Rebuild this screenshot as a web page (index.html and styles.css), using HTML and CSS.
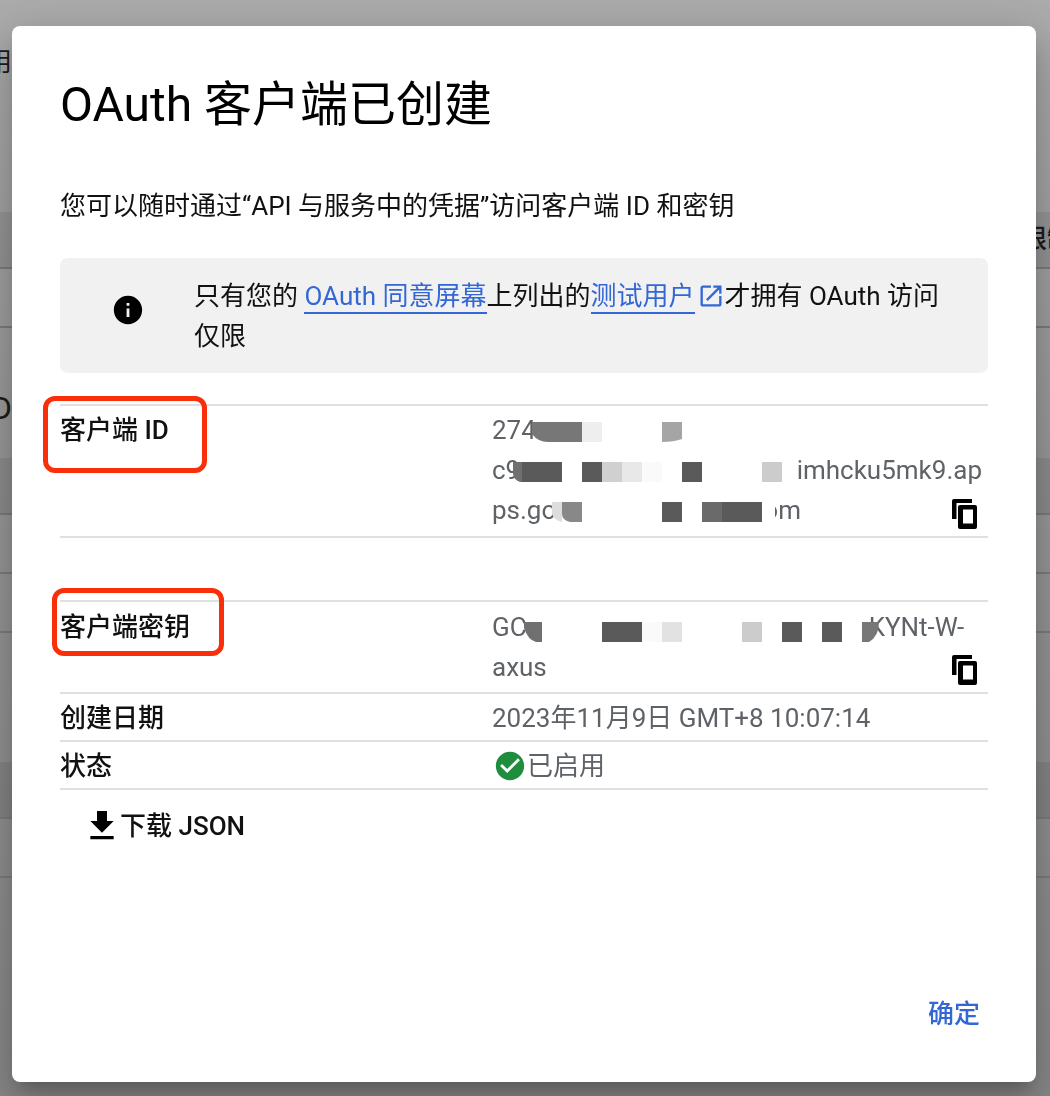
FILE: index.html
```html
<!DOCTYPE html>
<html lang="zh-CN">
<head>
<meta charset="utf-8">
<title>OAuth 客户端已创建</title>
<link rel="stylesheet" href="styles.css">
</head>
<body>
<div class="page">
  <div class="bg-title">用户</div>
  <div class="bg-table bg-first">
    <div class="bg-head"><span class="bg-head-text">限制</span></div>
    <div class="bg-row"></div>
  </div>
  <div class="bg-d">D</div>
  <div class="bg-table bg-second">
    <div class="bg-head"></div>
    <div class="bg-row"></div>
    <div class="bg-row"></div>
  </div>
  <div class="bg-table bg-third">
    <div class="bg-head"></div>
    <div class="bg-row"></div>
  </div>
</div>

<div class="dialog">
  <h1 class="title">OAuth 客户端已创建</h1>
  <p class="desc">您可以随时通过“API 与服务中的凭据”访问客户端 ID 和密钥</p>

  <div class="info">
    <svg class="info-icon" viewBox="0 0 24 24"><path d="M12 2C6.48 2 2 6.48 2 12s4.48 10 10 10 10-4.48 10-10S17.52 2 12 2zm1 15h-2v-6h2v6zm0-8h-2V7h2v2z"/></svg>
    <div class="info-text">只有您的 <a class="link">OAuth 同意屏幕</a>上列出的<a class="link">测试用户</a><svg class="ext-icon" viewBox="0 0 24 24"><path d="M19 19H5V5h7V3H5c-1.11 0-2 .9-2 2v14c0 1.1.89 2 2 2h14c1.1 0 2-.9 2-2v-7h-2v7zM14 3v2h3.59l-9.83 9.83 1.41 1.41L19 6.41V10h2V3h-7z"/></svg>才拥有 OAuth 访问<br>仅限</div>
  </div>

  <div class="row row-id">
    <div class="label">客户端 ID</div>
    <div class="value">
      <div class="line">274
        <svg class="mask" viewBox="0 0 496 40">
          <path fill="#777" d="M40 12h50v20H56q-10 0-16-8z"/>
          <rect fill="#eee" x="90" y="12" width="20" height="20"/>
          <path fill="#a5a5a5" d="M170 12h20v17q-8 3-20 3z"/>
        </svg>
      </div>
      <div class="line line-split"><span>c9</span><span class="tail">imhcku5mk9.ap</span>
        <svg class="mask" viewBox="0 0 496 40">
          <path fill="#707070" d="M21 12h9v20h-2q-6-2-7-8z"/>
          <rect fill="#5a5a5a" x="30" y="12" width="40" height="20"/>
          <rect fill="#5a5a5a" x="90" y="12" width="20" height="20"/>
          <rect fill="#d0d0d0" x="110" y="12" width="20" height="20"/>
          <rect fill="#e8e8e8" x="130" y="12" width="20" height="20"/>
          <rect fill="#fafafa" x="150" y="12" width="20" height="20"/>
          <rect fill="#5a5a5a" x="190" y="12" width="20" height="20"/>
          <rect fill="#ccc" x="270" y="12" width="20" height="20"/>
        </svg>
      </div>
      <div class="line line-gap"><span>ps.go</span><span class="tail-om">om</span>
        <svg class="mask" viewBox="0 0 496 40">
          <path fill="#ddd" d="M60 12h10v20q-8-2-10-8z"/>
          <path fill="#888" d="M70 12h20v20H78q-8-2-8-8z"/>
          <rect fill="#5a5a5a" x="170" y="12" width="20" height="20"/>
          <rect fill="#6a6a6a" x="210" y="12" width="20" height="20"/>
          <rect fill="#5a5a5a" x="230" y="12" width="40" height="20"/>
          <rect fill="#fff" x="270" y="10" width="13" height="24"/>
        </svg>
      </div>
    </div>
    <svg class="copy" viewBox="0 0 25 30"><path fill-rule="evenodd" d="M2 0h18v4H4.5v16H0V2a2 2 0 0 1 2-2zM8 6h15a2 2 0 0 1 2 2v20a2 2 0 0 1-2 2H8a2 2 0 0 1-2-2V8a2 2 0 0 1 2-2zm3 4.5v14h10v-14z"/></svg>
  </div>

  <div class="row row-secret">
    <div class="label">客户端密钥</div>
    <div class="value">
      <div class="line line-gap"><span>GC</span><span class="tail-key">KYNt-W-</span>
        <svg class="mask" viewBox="0 0 496 40">
          <path fill="#707070" d="M32 15h18v20H44q-8-2-12-14z"/>
          <rect fill="#5a5a5a" x="110" y="15" width="40" height="20"/>
          <rect fill="#fafafa" x="150" y="15" width="20" height="20"/>
          <rect fill="#e2e2e2" x="170" y="15" width="20" height="20"/>
          <rect fill="#ccc" x="250" y="15" width="20" height="20"/>
          <rect fill="#5a5a5a" x="290" y="15" width="20" height="20"/>
          <rect fill="#5a5a5a" x="330" y="15" width="20" height="20"/>
          <path fill="#777" d="M370 15h17q0 14-10 20h-7z"/>
        </svg>
      </div>
      <div class="line">axus</div>
    </div>
    <svg class="copy" viewBox="0 0 25 30"><path fill-rule="evenodd" d="M2 0h18v4H4.5v16H0V2a2 2 0 0 1 2-2zM8 6h15a2 2 0 0 1 2 2v20a2 2 0 0 1-2 2H8a2 2 0 0 1-2-2V8a2 2 0 0 1 2-2zm3 4.5v14h10v-14z"/></svg>
  </div>

  <div class="row row-plain">
    <div class="label">创建日期</div>
    <div class="value">2023年11月9日 GMT+8 10:07:14</div>
  </div>
  <div class="row row-plain row-last">
    <div class="label">状态</div>
    <div class="value status">
      <svg class="check" viewBox="0 0 24 24"><circle cx="12" cy="12" r="7" fill="#fff"/><path fill="#1e8e3e" d="M12 2C6.48 2 2 6.48 2 12s4.48 10 10 10 10-4.48 10-10S17.52 2 12 2zm-2 15l-5-5 1.41-1.41L10 14.17l7.59-7.59L19 8l-9 9z"/></svg>
      已启用
    </div>
  </div>

  <div class="download">
    <svg class="dl-icon" viewBox="0 0 24 24"><path d="M19 9h-4V3H9v6H5l7 7 7-7zM5 18v2h14v-2H5z"/></svg>
    <span class="dl-text">下载 JSON</span>
  </div>

  <div class="actions"><span class="ok">确定</span></div>

  <div class="callout callout-id"></div>
  <div class="callout callout-secret"></div>
</div>
</body>
</html>
```

FILE: styles.css
```css
* { box-sizing: border-box; }
html, body { margin: 0; height: 1096px; overflow: hidden; }
body {
  font-family: Roboto, "Noto Sans CJK SC", sans-serif;
  font-size: 26px;
  line-height: 40px;
  color: #202124;
  background: #fff;
}

/* dimmed page behind the dialog */
.page {
  height: 1096px;
  padding-top: 42px;
  background: linear-gradient(#acacac, #9a9a9a 40%, #888);
  color: #1c1c1c;
  overflow: hidden;
}
.bg-title { margin-left: -14px; height: 40px; }
.bg-first { margin-top: 130px; }
.bg-d { margin-top: 60px; margin-left: -9px; height: 40px; font-size: 32px; white-space: nowrap; }
.bg-second { margin-top: 30px; }
.bg-third { margin-top: 129px; }
.bg-head {
  height: 57px;
  background: rgba(0, 0, 0, .08);
  border-bottom: 2px solid #7c7c7c;
  text-align: right;
  white-space: nowrap;
  line-height: 54px;
  font-weight: 500;
}
.bg-head-text { margin-right: -23px; }
.bg-row { height: 59px; border-bottom: 2px solid #7c7c7c; }

/* dialog */
.dialog {
  position: fixed;
  top: 26px;
  left: 12px;
  width: 1024px;
  height: 1056px;
  padding: 47px 48px 48px;
  display: flex;
  flex-direction: column;
  background: #fff;
  border-radius: 8px;
  box-shadow: 0 11px 15px -7px rgba(0,0,0,.2), 0 24px 38px 3px rgba(0,0,0,.14), 0 9px 46px 8px rgba(0,0,0,.12);
}
.title {
  margin: 0;
  font-size: 48px;
  line-height: 64px;
  font-weight: 400;
  color: #000;
}
.desc { margin: 49px 0 0; color: #111; }

.info {
  margin-top: 32px;
  height: 115px;
  padding: 18px 30px 0 51px;
  display: flex;
  background: #f1f1f1;
  border-radius: 8px;
  color: #111;
}
.info-icon { width: 34px; height: 34px; margin-top: 17px; flex: none; }
.info-text { margin-left: 49px; }
.link { color: #3367d6; border-bottom: 2px solid #3367d6; padding-bottom: 1px; }
.ext-icon { width: 28px; height: 28px; fill: #3367d6; vertical-align: -5px; margin-left: 2px; }

/* detail rows */
.row {
  position: relative;
  display: grid;
  grid-template-columns: 432px 1fr;
  border-top: 2px solid #e0e0e0;
}
.label { font-weight: 500; color: #111; }
.value { color: #5f6368; min-width: 0; }
.row-id { margin-top: 31px; padding: 4px 0 6px; border-bottom: 2px solid #e0e0e0; }
.row-secret { margin-top: 62px; padding: 5px 0; }
.row-plain { height: 48px; padding-top: 4px; }
.row-last { height: 50px; border-bottom: 2px solid #e0e0e0; }

.line { position: relative; height: 40px; white-space: nowrap; }
.line-split { display: flex; justify-content: space-between; padding-right: 6px; }
.line-gap { display: flex; }
.tail-om { margin-left: 207px; }
.tail-key { margin-left: 342px; }
.mask { position: absolute; left: 0; top: 0; width: 496px; height: 40px; }

.copy { position: absolute; right: 11px; bottom: 7px; width: 25px; height: 30px; }

.status { display: flex; align-items: center; height: 40px; margin-left: 1px; }
.check { width: 34px; height: 34px; margin-right: 0; flex: none; }

.download {
  margin: 16px 0 0 22px;
  height: 40px;
  display: flex;
  align-items: center;
  font-weight: 500;
  color: #111;
}
.dl-icon { width: 40px; height: 40px; flex: none; }
.dl-text { margin-left: -2px; }

.actions { margin-top: auto; display: flex; justify-content: flex-end; padding-right: 8px; }
.ok { color: #3367d6; font-weight: 500; }

/* annotations drawn over the screenshot */
.callout { position: absolute; border: 5px solid #f92f0a; border-radius: 12px; }
.callout-id { left: 31px; top: 370px; width: 164px; height: 77px; }
.callout-secret { left: 40px; top: 562px; width: 172px; height: 68px; }
```
